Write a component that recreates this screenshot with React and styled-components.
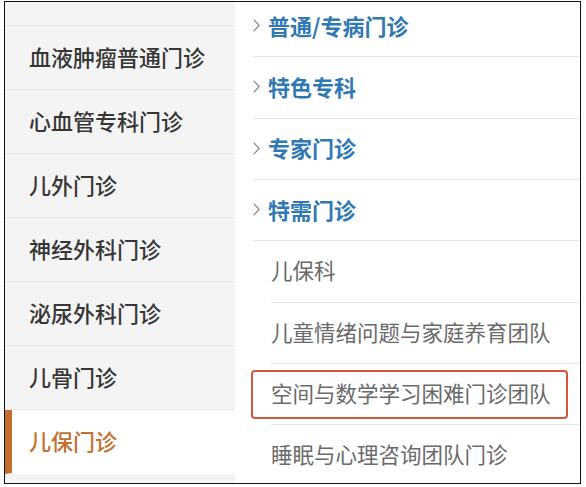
import React from 'react'
import styled, { createGlobalStyle } from 'styled-components'

const departments = ['血液肿瘤普通门诊', '心血管专科门诊', '儿外门诊', '神经外科门诊', '泌尿外科门诊', '儿骨门诊', '儿保门诊']
const active = '儿保门诊'

const clinics = [
  { name: '普通/专病门诊', group: true },
  { name: '特色专科', group: true },
  { name: '专家门诊', group: true },
  { name: '特需门诊', group: true },
  { name: '儿保科' },
  { name: '儿童情绪问题与家庭养育团队' },
  { name: '空间与数学学习困难门诊团队', marked: true },
  { name: '睡眠与心理咨询团队门诊' },
]

function Chevron() {
  return (
    <svg width="7" height="13" viewBox="0 0 7 13">
      <polyline points="0.7,0.7 6.2,6.5 0.7,12.3" fill="none" stroke="#8a8a8a" strokeWidth="1.2" />
    </svg>
  )
}

function App() {
  return (
    <>
      <GlobalStyle />
      <Frame>
        <Sidebar>
          <Spacer />
          {departments.map((d) => (
            <DeptRow key={d} $active={d === active}>{d}</DeptRow>
          ))}
        </Sidebar>
        <Panel>
          <List>
            {clinics.map((c) => (
              <Item key={c.name} $group={c.group}>
                <Inner>
                  {c.group && <Chevron />}
                  <Label $group={c.group}>{c.name}</Label>
                </Inner>
                {c.marked && <Highlight />}
              </Item>
            ))}
          </List>
        </Panel>
      </Frame>
    </>
  )
}

const GlobalStyle = createGlobalStyle`
  body {
    margin: 0;
    background: #fff;
    font-family: "Noto Sans CJK SC", "Noto Sans", sans-serif;
  }
`

const Frame = styled.div`
  box-sizing: border-box;
  margin: 1px 0 0 4px;
  width: 577px;
  height: 483px;
  border: 1px solid #111;
  display: flex;
  overflow: hidden;
`

const Sidebar = styled.div`
  width: 230px;
  flex-shrink: 0;
  background: #f4f4f4;
  display: flex;
  flex-direction: column;
`

const Spacer = styled.div`
  height: 23px;
  border-bottom: 1px solid #e6e6e6;
`

const DeptRow = styled.div`
  box-sizing: border-box;
  height: 64px;
  flex-shrink: 0;
  display: flex;
  align-items: center;
  line-height: 1;
  padding: 0 0 4px 24px;
  font-size: 22px;
  font-weight: 500;
  color: #363636;
  border-bottom: 1px solid #e6e6e6;

  ${(p) =>
    p.$active &&
    `
    color: #c0702f;
    background: #fff;
    border-bottom-color: #fff;
    border-left: 7px solid #c56d2a;
    padding-left: 17px;
  `}
`

const Panel = styled.div`
  flex: 1;
  background: #fff;
`

const List = styled.div`
  margin-top: -6px;
  display: flex;
  flex-direction: column;
`

const Item = styled.div`
  position: relative;
  padding-left: ${(p) => (p.$group ? '18px' : '36px')};
`

const Inner = styled.div`
  box-sizing: border-box;
  height: 61.33px;
  display: flex;
  align-items: center;
  padding-bottom: 3px;
  line-height: 1;
  border-bottom: 1px solid #e8e8e8;
  svg {
    margin: 2px 8px 0 0;
    flex-shrink: 0;
  }
`

const Label = styled.span`
  font-size: ${(p) => (p.$group ? '22px' : '21.5px')};
  font-weight: ${(p) => (p.$group ? 700 : 400)};
  color: ${(p) => (p.$group ? '#2f78b3' : '#6a6a6a')};
`

const Highlight = styled.div`
  position: absolute;
  left: 16px;
  right: 12px;
  top: 6px;
  bottom: 6px;
  border: 2px solid #d4573b;
  border-radius: 4px;
  pointer-events: none;
`

export default App
